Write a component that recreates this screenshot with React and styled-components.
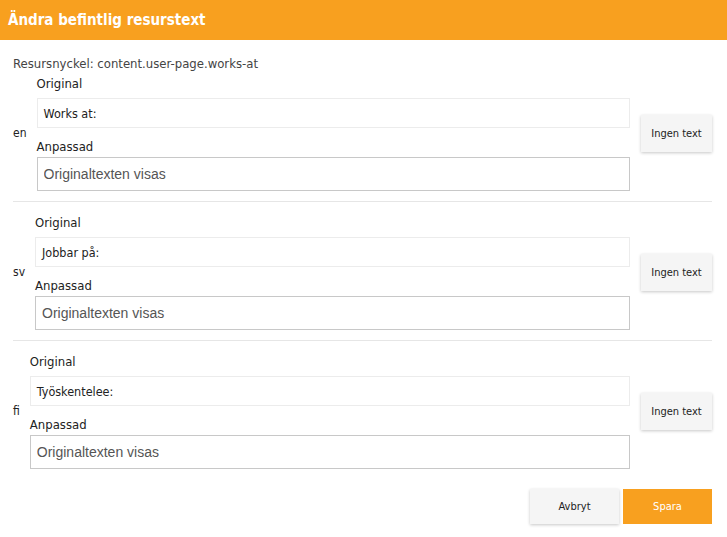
import React from 'react';
import styled, { createGlobalStyle } from 'styled-components';

const GlobalStyle = createGlobalStyle`
  body {
    margin: 0;
    background: #fff;
    font-family: "DejaVu Sans Condensed", "Liberation Sans Narrow", Roboto, sans-serif;
    color: #222;
  }
`;

const Dialog = styled.div`
  width: 727px;
  min-height: 537px;
  background: #fff;
`;

const Header = styled.div`
  height: 40px;
  background: #f8a01f;
  color: #fff;
  display: flex;
  align-items: center;
  padding-left: 8px;
  font-size: 15px;
  font-weight: bold;
`;

const Body = styled.div`
  padding: 16px 15px 0 13px;
`;

const KeyLine = styled.div`
  font-size: 13px;
  line-height: 16px;
  color: #444;
`;

const Section = styled.div`
  display: flex;
  align-items: center;
  gap: 10px;
  padding: ${p => (p.$first ? '3px' : '12px')} 0 10px;
  border-bottom: ${p => (p.$last ? 'none' : '1px solid #e6e6e6')};
`;

const Lang = styled.div`
  font-size: 12px;
`;

const Fields = styled.div`
  flex: 1;
  display: flex;
  flex-direction: column;
`;

const Label = styled.div`
  font-size: 13px;
  line-height: 18px;
  margin-bottom: ${p => (p.$tight ? '1px' : '5px')};
  margin-top: ${p => (p.$spaced ? '10px' : '0')};
`;

const OriginalBox = styled.div`
  height: 30px;
  box-sizing: border-box;
  border: 1px solid #ececec;
  padding: 0 6px;
  display: flex;
  align-items: center;
  font-size: 12.5px;
`;

const Input = styled.input`
  height: 34px;
  box-sizing: border-box;
  border: 1px solid #c8c8c8;
  padding: 0 6px;
  font-family: "Liberation Sans", Arial, sans-serif;
  font-size: 14px;
  color: #555;
  outline: none;
  &::placeholder {
    color: #555;
  }
`;

const Button = styled.button`
  font-family: inherit;
  font-size: 11px;
  border: none;
  background: ${p => (p.$primary ? '#f8a01f' : '#f5f5f5')};
  color: ${p => (p.$primary ? '#fff' : '#222')};
  box-shadow: ${p => (p.$primary ? 'none' : '0 1px 3px rgba(0,0,0,0.22)')};
  cursor: pointer;
`;

const SideButton = styled(Button)`
  width: 71px;
  height: 37px;
  margin-left: 1px;
`;

const Footer = styled.div`
  display: flex;
  justify-content: flex-end;
  gap: 4px;
  margin-top: 10px;
`;

const FooterButton = styled(Button)`
  width: 89px;
  height: 35px;
`;

const rows = [
  { lang: 'en', text: 'Works at:' },
  { lang: 'sv', text: 'Jobbar på:' },
  { lang: 'fi', text: 'Työskentelee:' },
];

export default function App() {
  return (
    <Dialog>
      <GlobalStyle />
      <Header>Ändra befintlig resurstext</Header>
      <Body>
        <KeyLine>Resursnyckel: content.user-page.works-at</KeyLine>
        {rows.map((r, i) => (
          <Section key={r.lang} $first={i === 0} $last={i === rows.length - 1}>
            <Lang>{r.lang}</Lang>
            <Fields>
              <Label>Original</Label>
              <OriginalBox>{r.text}</OriginalBox>
              <Label $spaced $tight>Anpassad</Label>
              <Input placeholder="Originaltexten visas" />
            </Fields>
            <SideButton>Ingen text</SideButton>
          </Section>
        ))}
        <Footer>
          <FooterButton>Avbryt</FooterButton>
          <FooterButton $primary>Spara</FooterButton>
        </Footer>
      </Body>
    </Dialog>
  );
}
